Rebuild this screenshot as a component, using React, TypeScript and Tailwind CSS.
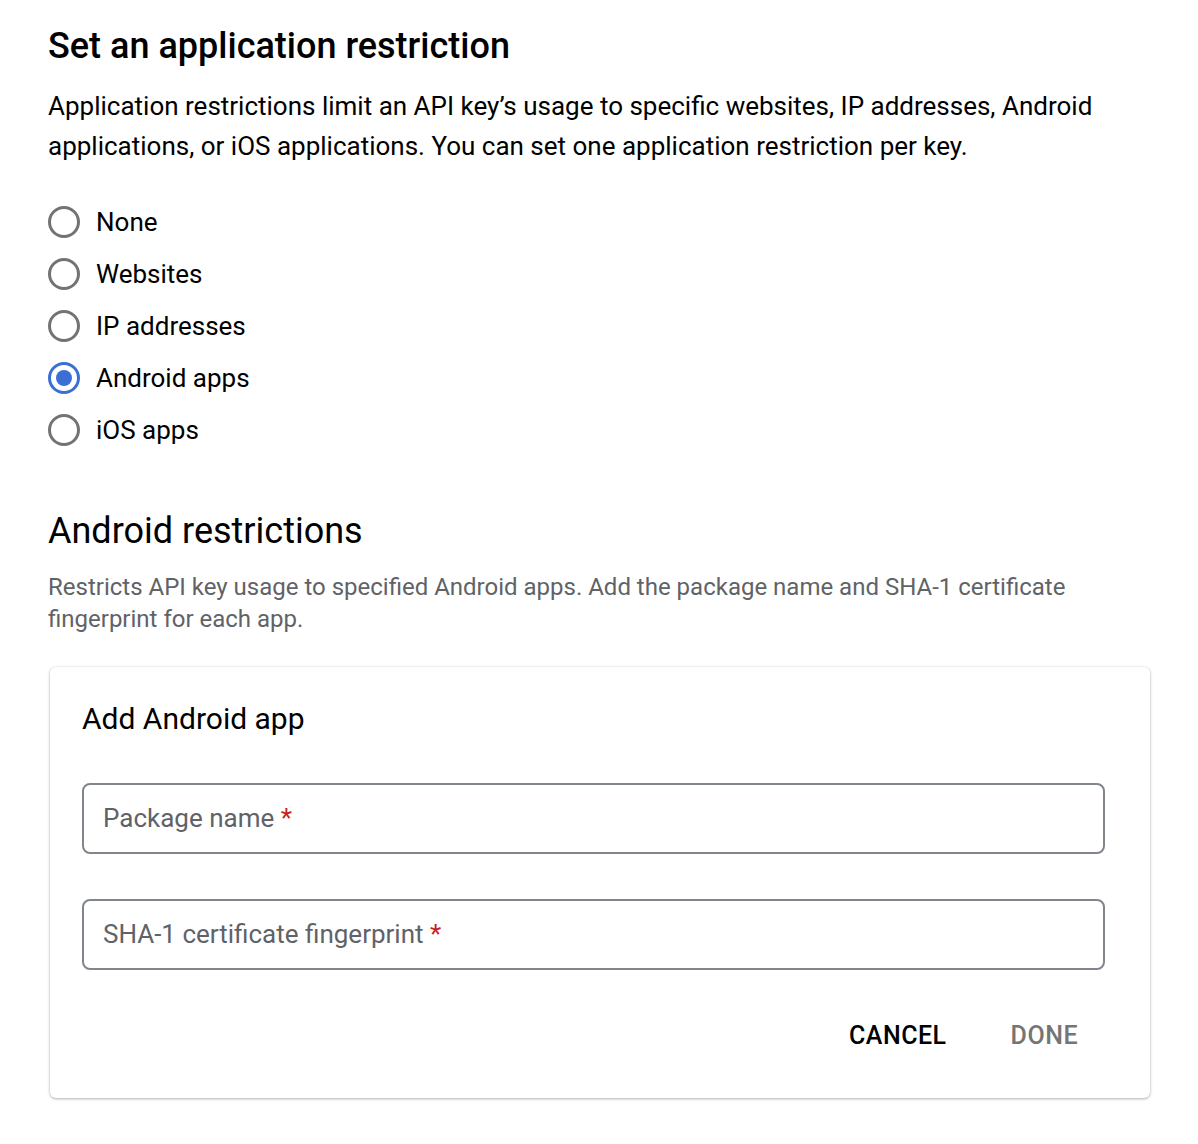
import { useState } from 'react';

const OPTIONS = ['None', 'Websites', 'IP addresses', 'Android apps', 'iOS apps'];

function Radio({ checked }: { checked: boolean }) {
  return (
    <span
      className={`flex h-[32px] w-[32px] items-center justify-center rounded-full border-[3px] ${
        checked ? 'border-[#3b6fd6]' : 'border-[#737373]'
      }`}
    >
      {checked && <span className="h-[16px] w-[16px] rounded-full bg-[#3b6fd6]" />}
    </span>
  );
}

function OutlinedField({ label }: { label: string }) {
  return (
    <div className="flex h-[71px] items-center rounded-[8px] border-2 border-[#80868b] px-[19px]">
      <span className="text-[26px] text-[#5f6368]">
        {label} <span className="text-[#c5221f]">*</span>
      </span>
    </div>
  );
}

export default function App() {
  const [selected, setSelected] = useState('Android apps');

  return (
    <div className="min-h-screen bg-white pl-[48px] pr-[48px] pt-[24px] font-['Roboto',sans-serif] text-[#202124]">
      <h1 className="text-[36px] font-medium leading-[44px] text-black">Set an application restriction</h1>
      <p className="mt-[18px] text-[26px] leading-[40px] text-black">
        Application restrictions limit an API key’s usage to specific websites, IP addresses, Android
        applications, or iOS applications. You can set one application restriction per key.
      </p>

      {/* Restriction type radios */}
      <div className="mt-[40px] flex flex-col gap-[20px]">
        {OPTIONS.map((opt) => (
          <label key={opt} className="flex h-[32px] cursor-pointer items-center gap-[16px]" onClick={() => setSelected(opt)}>
            <Radio checked={selected === opt} />
            <span className="text-[26px] text-black">{opt}</span>
          </label>
        ))}
      </div>

      <h2 className="mt-[63px] text-[36px] leading-[44px] text-black">Android restrictions</h2>
      <p className="mt-[18px] text-[24px] leading-[32px] text-[#5f6368]">
        Restricts API key usage to specified Android apps. Add the package name and SHA-1 certificate
        fingerprint for each app.
      </p>

      <div className="ml-[2px] mt-[32px] w-[1100px] rounded-[6px] bg-white px-[32px] pb-[43px] pt-[32px] shadow-[0_1px_3px_rgba(0,0,0,0.3),0_0_2px_rgba(0,0,0,0.08)]">
        <h3 className="text-[30px] leading-[40px] text-black">Add Android app</h3>
        <div className="mt-[44px] flex w-[1023px] flex-col gap-[45px]">
          <OutlinedField label="Package name" />
          <OutlinedField label="SHA-1 certificate fingerprint" />
        </div>
        <div className="mt-[47px] flex justify-end gap-[64px] pr-[40px]">
          <button className="text-[25px] font-medium tracking-[0.5px] text-black">CANCEL</button>
          <button className="text-[25px] font-medium tracking-[0.5px] text-[#757575]">DONE</button>
        </div>
      </div>
    </div>
  );
}
